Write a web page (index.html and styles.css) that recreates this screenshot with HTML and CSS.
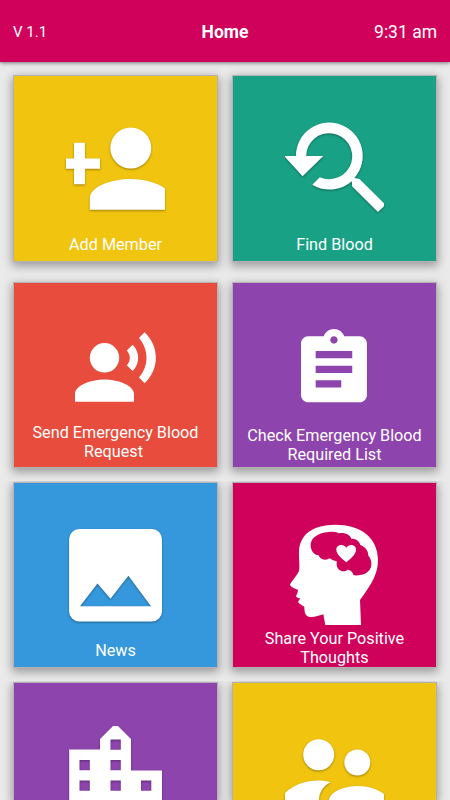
FILE: index.html
```html
<!DOCTYPE html>
<html lang="en">
<head>
<meta charset="utf-8">
<title>Home</title>
<link rel="stylesheet" href="styles.css">
</head>
<body>
<header class="bar">
  <span class="version">V 1.1</span>
  <h1 class="title">Home</h1>
  <span class="time">9:31 am</span>
</header>
<main class="grid">
  <section class="row row-first">
    <a class="card yellow add">
      <svg class="icon shadow" width="100" height="84" viewBox="66 127 100 84"><circle cx="130.8" cy="148" r="20.5"/><path d="M74 142.800h11v15.600h15v10.400H85v15.400H74v-15.400h-8v-10.400h8zM89.800 209.800V198.500C89.800 187 110 179 131 179c14 0 26 4 34 9.200V209.800z"/></svg>
      <span class="label">Add Member</span>
    </a>
    <a class="card green find">
      <svg class="icon shadow" width="100" height="92" viewBox="285 121 100 92"><path d="M295.900 156a33.400 33.400 0 1 1 58.500 22l5.100 1 24.500 24.300v3L378 212l-25.800-25.500-.4-5.300a33.400 33.400 0 0 1-39.500 3.500l7.500-7.500A23 23 0 1 0 306.200 156h17.100l-20.700 20.300L285 157v-1z"/></svg>
      <span class="label">Find Blood</span>
    </a>
  </section>
  <section class="row row-second">
    <a class="card red send">
      <svg class="icon" width="82" height="71" viewBox="75 332 82 71"><circle cx="104.500" cy="357.800" r="14.700"/><path d="M75 401.800V394c0-9.500 18-14.600 29.500-14.600S134 384.500 134 394v7.800zM126.800 350.600l5.900-5.900c7.300 7.300 7.300 19 0 26.300l-5.900-5.700c4-4.600 4-10 0-14.700zM139 338l5.600-5.700c15 14 15 37 0 51l-5.600-5.800c10-11.500 10-28 0-39.500z"/></svg>
      <span class="label">Send Emergency Blood<br>Request&nbsp;</span>
    </a>
    <a class="card purple check">
      <svg class="icon" width="67" height="74" viewBox="3 1 18.300 20.200"><path d="M19 3h-4.180C14.400 1.840 13.300 1 12 1c-1.300 0-2.400.84-2.820 2H5c-1.100 0-2 .9-2 2v14c0 1.100.9 2 2 2h14c1.100 0 2-.9 2-2V5c0-1.100-.9-2-2-2zm-7 0c.55 0 1 .45 1 1s-.45 1-1 1-1-.45-1-1 .45-1 1-1zm2 14H7v-2h7v2zm3-4H7v-2h10v2zm0-4H7V7h10v2z"/></svg>
      <span class="label">Check Emergency Blood<br>Required List</span>
    </a>
  </section>
  <section class="row">
    <a class="card blue news">
      <svg class="icon shadow" width="93" height="93" viewBox="69 528.500 93 93"><path fill-rule="evenodd" d="M79.300 528.500h72.500a10.200 10.200 0 0 1 10.200 10.200v72.200a10.200 10.200 0 0 1-10.200 10.200H79.300a10.200 10.200 0 0 1-10.200-10.200v-72.200a10.200 10.200 0 0 1 10.200-10.200zM80 605.800h71l-22.600-30.500-17.900 22.900-13-15.200z"/></svg>
      <span class="label">News</span>
    </a>
    <a class="card pink share">
      <svg class="icon" width="100" height="110" viewBox="0 0 300 330"><path fill-rule="evenodd" d="M121 330L115 298C100 302 90 307 75 306C62 303 58 295 58 275C52 272 42 266 39 261L46 250C40 250 34 247 33 243C34 240 37 239 39 224C32 222 18 217 15 209C20 198 34 185 42 168C45 155 41 130 42 108C45 60 80 30 150 29C225 29 278 65 279 135C279 175 262 205 225 255L228 330ZM77 92C77 62 110 50 143 50C155 50 160 54 163 55C180 52 195 60 199 71C210 70 222 76 226 90C240 95 250 107 250 122C260 132 262 150 255 163C245 178 230 182 206 181C203 170 195 163 187 164C182 172 158 172 155 150L155 138C145 138 140 133 133 130C128 136 108 138 100 120C88 120 78 108 77 92Z"/><path d="M184 142C176 134 154 120 154 104C154 88 176 86 184 98C192 86 213 88 213 104C213 120 192 134 184 142Z"/></svg>
      <span class="label">Share Your Positive<br>Thoughts</span>
    </a>
  </section>
  <section class="row row-last">
    <a class="card purple city">
      <svg class="icon shadow" width="93" height="75" viewBox="69 725.500 93 75"><path fill-rule="evenodd" d="M69.200 749H100V738.500L113 725.500h5L131 738.500V770h31v30.500H69.200zM110.500 739v10.300h10.300V739zM110.500 759.500v10.300h10.300v-10.300zM110.500 780v10.300h10.300V780zM79.500 759.500v10.300h10.300v-10.300zM79.500 780v10.300h10.300V780zM141 780v10.300h10.300V780z"/></svg>
    </a>
    <a class="card yellow people">
      <svg class="icon shadow" width="100" height="62" viewBox="285 738.500 100 62"><circle cx="318.700" cy="754.300" r="15.500"/><circle cx="357.300" cy="762" r="13"/><path d="M285 800.500V792.500C294 784 306 780 318.500 780c4.500 0 8.500.5 12 1.600C323 786 319 792 319 800v.5zM329 800.500V799c2-8.500 16-13.500 29-13.500 10 0 20 3 26 8v7z"/></svg>
    </a>
  </section>
</main>
</body>
</html>
```

FILE: styles.css
```css
* { box-sizing: border-box; }

body {
  margin: 0;
  height: 800px;
  overflow: hidden;
  background: #eaeaea;
  color: #fff;
  font-family: Roboto, "Liberation Sans", sans-serif;
}

.bar {
  position: relative;
  z-index: 1;
  display: grid;
  grid-template-columns: 1fr auto 1fr;
  align-items: center;
  height: 62px;
  padding: 1px 13px 0;
  background: #d0015b;
  box-shadow: 0 1px 4px rgba(0, 0, 0, .5);
}

.version { padding-top: 1px; font-size: 15px; }
.title { margin: 0; font-size: 17.500px; font-weight: 700; }
.time { font-size: 17.500px; text-align: right; }

.row {
  display: flex;
  gap: 14px;
  height: 200px;
  padding: 1px 13px 0;
  overflow: hidden;
  background: #eaeaea;
}

.row-first { height: 213px; padding-top: 13px; }
.row-second { height: 206px; padding-top: 7px; }
.row-last { height: 119px; }

.card {
  display: flex;
  flex-direction: column;
  align-items: center;
  width: 205px;
  height: 186px;
  border: 1px solid #b5b1b5;
  box-shadow: 0 3px 9px 1px rgba(0, 0, 0, .35);
}

.row-first .card { height: 187px; }
.row-last .card { height: 118px; border-bottom: 0; }

.yellow { background: #f1c40f; }
.green { background: #19a186; }
.red { background: #e84c3c; }
.purple { background: #8e44ad; }
.blue { background: #3598dc; }
.pink { background: #d0015b; }

.icon { display: block; flex: none; fill: #fff; }
.shadow { filter: drop-shadow(0 1px 1px rgba(0, 0, 0, .35)); }

.label {
  margin-top: auto;
  font-size: 16.200px;
  line-height: 19px;
  text-align: center;
  white-space: nowrap;
}

.add { padding: 51px 0 7px; }
.find { padding: 45px 0 7px; }
.send { padding: 49px 0 6px; }
.check { padding: 46px 0 3px; }
.news { padding: 46px 0 7px; }
.share { padding: 32px 0 0; }
.city { padding-top: 43px; }
.people { padding-top: 56px; }
```
